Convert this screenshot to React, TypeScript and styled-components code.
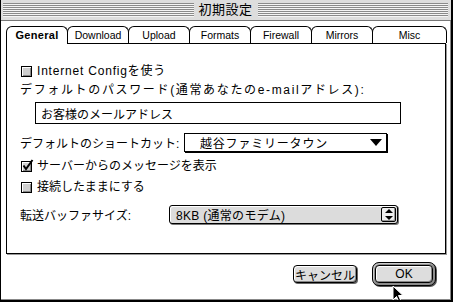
import styled, { createGlobalStyle } from "styled-components";

const GlobalStyle = createGlobalStyle`
  html, body {
    margin: 0;
    padding: 0;
    background: #ffffff;
  }
`;

const TABS = ["General", "Download", "Upload", "Formats", "Firewall", "Mirrors", "Misc"];

export default function App() {
  return (
    <>
      <GlobalStyle />
      <Window>
        <TitleBar>
          <Stripes />
          <Title>{"初期設定"}</Title>
          <Stripes />
        </TitleBar>
        <Body>
          <TabRow>
            {TABS.map((t, i) => (
              <Tab key={t} $active={i === 0} $last={i === TABS.length - 1}>
                {t}
              </Tab>
            ))}
          </TabRow>
          <Panel>
            <CheckRow $top={20}>
              <Checkbox />
              <Label $spacing={0.8}>{"Internet Configを使う"}</Label>
            </CheckRow>
            <TextRow $top={5}>
              <Label $spacing={1.65}>{"デフォルトのパスワード(通常あなたのe-mailアドレス):"}</Label>
            </TextRow>
            <TextField readOnly value={"お客様のメールアドレス"} />
            <FieldRow $top={9}>
              <FieldLabel $width={164}>{"デフォルトのショートカット:"}</FieldLabel>
              <WhitePopup>
                <PopupText $spacing={0.8}>{"越谷ファミリータウン"}</PopupText>
                <svg width="12" height="7" viewBox="0 0 12 7">
                  <path d="M0 0 H12 L6 7 Z" fill="#000" />
                </svg>
              </WhitePopup>
            </FieldRow>
            <CheckRow $top={7}>
              <Checkbox>
                <svg width="13" height="13" viewBox="0 0 13 13">
                  <path
                    d="M2.5 6.5 L5 10 L11.5 1"
                    fill="none"
                    stroke="#000"
                    strokeWidth="2"
                  />
                </svg>
              </Checkbox>
              <Label $spacing={0}>{"サーバーからのメッセージを表示"}</Label>
            </CheckRow>
            <CheckRow $top={7}>
              <Checkbox />
              <Label $spacing={0}>{"接続したままにする"}</Label>
            </CheckRow>
            <FieldRow $top={11}>
              <FieldLabel $width={149}>{"転送バッファサイズ:"}</FieldLabel>
              <GrayPopup>
                <PopupText $spacing={0.3}>{"8KB (通常のモデム)"}</PopupText>
                <Stepper>
                  <svg width="8" height="11" viewBox="0 0 8 11">
                    <path d="M4 0 L8 4 H0 Z" fill="#000" />
                    <path d="M0 7 H8 L4 11 Z" fill="#000" />
                  </svg>
                </Stepper>
              </GrayPopup>
            </FieldRow>
          </Panel>
          <ButtonRow>
            <PushButton>{"キャンセル"}</PushButton>
            <DefaultRing>
              <PushButton $fill>{"OK"}</PushButton>
            </DefaultRing>
          </ButtonRow>
        </Body>
        <Cursor>
          <svg width="12" height="18" viewBox="0 0 12 18">
            <path
              d="M1 1 L1 15 L4.5 11.5 L7 17 L9 16 L6.5 10.5 L11 10.5 Z"
              fill="#000"
              stroke="#fff"
              strokeWidth="1"
            />
          </svg>
        </Cursor>
      </Window>
    </>
  );
}

const Window = styled.div`
  position: relative;
  width: 453px;
  height: 302px;
  box-sizing: border-box;
  display: flex;
  flex-direction: column;
  background: #ffffff;
  border-left: 1px solid #000;
  border-right: 2px solid #000;
  border-bottom: 2px solid #000;
  box-shadow: inset -1px -1px 0 #888;
  overflow: hidden;
  font-family: "Liberation Sans", "Noto Sans CJK JP", sans-serif;
  color: #000;
`;

const TitleBar = styled.div`
  height: 21px;
  box-sizing: border-box;
  display: flex;
  align-items: center;
  padding: 0 3px 0 2px;
  background: #dddddd;
  border-bottom: 1px solid #777;
`;

const Stripes = styled.div`
  flex: 1;
  height: 14px;
  background: repeating-linear-gradient(
    to bottom,
    #8a8a8a 0px,
    #8a8a8a 1px,
    #f4f4f4 1px,
    #f4f4f4 2px
  );
`;

const Title = styled.div`
  padding: 0 5px;
  font-size: 13px;
  line-height: 16px;
  letter-spacing: 0.5px;
`;

const Body = styled.div`
  flex: 1;
  display: flex;
  flex-direction: column;
  padding: 5px 5px 0 5px;
`;

const TabRow = styled.div`
  display: flex;
  align-items: flex-end;
  height: 17px;
  width: 440px;
`;

const Tab = styled.div<{ $active?: boolean; $last?: boolean }>`
  position: relative;
  z-index: ${({ $active }) => ($active ? 2 : 1)};
  box-sizing: border-box;
  width: ${({ $last }) => ($last ? "auto" : "62px")};
  flex: ${({ $last }) => ($last ? 1 : "none")};
  height: ${({ $active }) => ($active ? "18px" : "17px")};
  margin-bottom: ${({ $active }) => ($active ? "-1px" : "0")};
  margin-right: -1px;
  display: flex;
  align-items: center;
  justify-content: center;
  padding-bottom: ${({ $active }) => ($active ? "1px" : "0")};
  background: #ffffff;
  border: 1px solid #000;
  border-bottom: none;
  border-radius: 6px 6px 0 0;
  font-size: ${({ $active }) => ($active ? "11px" : "10.5px")};
  font-weight: ${({ $active }) => ($active ? 700 : 400)};
  letter-spacing: ${({ $active }) => ($active ? "0.3px" : "0")};
`;

const Panel = styled.div`
  width: 440px;
  height: 211px;
  box-sizing: border-box;
  display: flex;
  flex-direction: column;
  padding-left: 13px;
  border: 1px solid #000;
  box-shadow: 1px 1px 0 #999;
`;

const CheckRow = styled.div<{ $top: number }>`
  display: flex;
  align-items: center;
  gap: 5px;
  height: 14px;
  margin-top: ${({ $top }) => $top}px;
`;

const TextRow = styled.div<{ $top: number }>`
  display: flex;
  align-items: center;
  height: 14px;
  margin-top: ${({ $top }) => $top}px;
`;

const Checkbox = styled.div`
  position: relative;
  width: 11px;
  height: 11px;
  box-sizing: border-box;
  margin-left: 1px;
  border: 1px solid #000;
  background: #cfcfcf;
  box-shadow: inset 1px 1px 0 #fff, inset -1px -1px 0 #888;

  svg {
    position: absolute;
    left: -1px;
    top: -3px;
  }
`;

const Label = styled.span<{ $spacing: number }>`
  font-size: 12px;
  line-height: 14px;
  letter-spacing: ${({ $spacing }) => $spacing}px;
  white-space: nowrap;
`;

const TextField = styled.input`
  margin: 5px 0 0 15px;
  width: 366px;
  height: 22px;
  box-sizing: border-box;
  padding: 0 0 0 5px;
  border: 1px solid #000;
  outline: none;
  background: #fff;
  font-family: "Liberation Sans", "Noto Sans CJK JP", sans-serif;
  font-size: 12px;
  letter-spacing: 0;
  color: #000;
`;

const FieldRow = styled.div<{ $top: number }>`
  display: flex;
  align-items: center;
  margin-top: ${({ $top }) => $top}px;
`;

const FieldLabel = styled.span<{ $width: number }>`
  width: ${({ $width }) => $width}px;
  flex: none;
  font-size: 12px;
  letter-spacing: 0;
  white-space: nowrap;
`;

const WhitePopup = styled.div`
  width: 203px;
  height: 19px;
  box-sizing: border-box;
  display: flex;
  align-items: center;
  justify-content: space-between;
  padding: 0 4px 0 15px;
  border: 1px solid #000;
  box-shadow: 1px 1px 0 #000;
  background: #fff;
`;

const GrayPopup = styled.div`
  width: 229px;
  height: 19px;
  box-sizing: border-box;
  display: flex;
  align-items: center;
  justify-content: space-between;
  padding: 0 1px 0 6px;
  border: 1px solid #000;
  border-radius: 3px;
  box-shadow: 1px 1px 0 #777, inset 1px 1px 0 #fff;
  background: #dcdcdc;
`;

const PopupText = styled.span<{ $spacing: number }>`
  font-size: 12px;
  letter-spacing: ${({ $spacing }) => $spacing}px;
  white-space: nowrap;
`;

const Stepper = styled.div`
  width: 15px;
  height: 15px;
  box-sizing: border-box;
  display: flex;
  align-items: center;
  justify-content: center;
  border: 1px solid #000;
  border-radius: 2px;
  background: #eeeeee;
  box-shadow: inset -1px -1px 0 #999;
`;

const ButtonRow = styled.div`
  display: flex;
  justify-content: flex-end;
  align-items: center;
  gap: 15px;
  margin-top: 8px;
  padding-right: 10px;
`;

const PushButton = styled.div<{ $fill?: boolean }>`
  width: ${({ $fill }) => ($fill ? "100%" : "64px")};
  height: ${({ $fill }) => ($fill ? "100%" : "18px")};
  box-sizing: border-box;
  display: flex;
  align-items: center;
  justify-content: center;
  border: 1px solid #000;
  border-radius: 4px;
  background: #dddddd;
  box-shadow: inset 1px 1px 0 #fff, inset -1px -1px 0 #888,
    ${({ $fill }) => ($fill ? "0 0 0 0 transparent" : "1px 1px 0 #666")};
  font-size: 12px;
  letter-spacing: 0;
  white-space: nowrap;
`;

const DefaultRing = styled.div`
  width: 64px;
  height: 24px;
  box-sizing: border-box;
  padding: 2px;
  border: 1px solid #000;
  border-radius: 7px;
  background: #8c8c8c;
  box-shadow: 1px 1px 0 #555, inset 1px 1px 0 #ccc;
`;

const Cursor = styled.div`
  position: absolute;
  left: 391px;
  top: 285px;
  line-height: 0;
`;
